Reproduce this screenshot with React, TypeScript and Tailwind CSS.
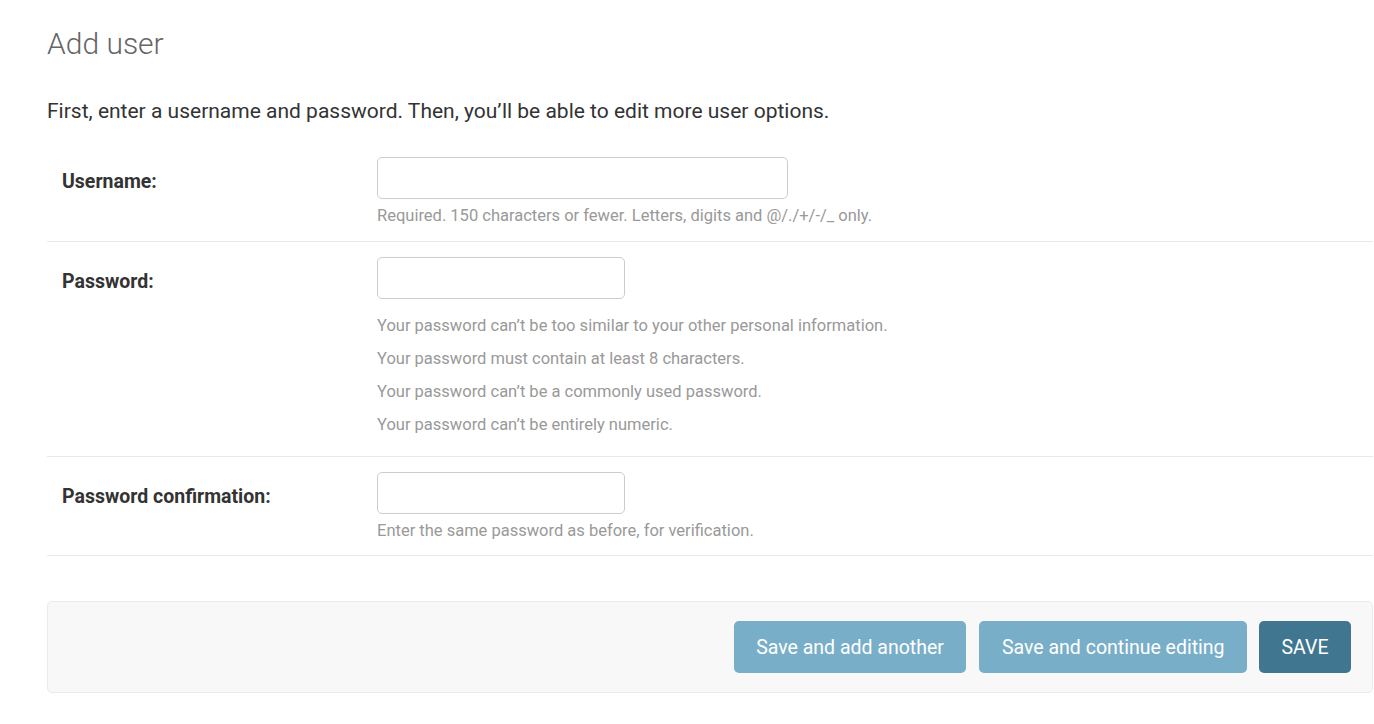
export default function App() {
  const rowCls = "flex px-[15px] pt-[15px] pb-[14px] border-b border-[#eaeaea]";
  const labelCls = "w-[315px] shrink-0 pt-[13px] text-[19.5px] leading-[24px] font-bold text-[#333]";
  const inputCls = "block h-[42px] rounded-[5px] border border-[#ccc] bg-white";
  const helpCls = "text-[16.5px] text-[#999]";
  return (
    <div className="min-h-[724px] bg-white" style={{ fontFamily: "Roboto, 'Liberation Sans', sans-serif" }}>
      <div className="pl-[47px] pt-[26px] w-[1374px]">
        <h1 className="text-[30px] font-light text-[#666] leading-[36px]">Add user</h1>
        <p className="mt-[37px] text-[21px] leading-[25px] text-[#333]">
          First, enter a username and password. Then, you’ll be able to edit more user options.
        </p>
        <div className="mt-[18px] w-[1326px]">
          <div className={rowCls}>
            <label className={labelCls}>Username:</label>
            <div>
              <input type="text" className={`${inputCls} w-[411px]`} />
              <div className={`${helpCls} mt-[6px] leading-[22px]`}>
                Required. 150 characters or fewer. Letters, digits and @/./+/-/_ only.
              </div>
            </div>
          </div>
          <div className={`${rowCls} !pb-[15px]`}>
            <label className={labelCls}>Password:</label>
            <div>
              <input type="password" className={`${inputCls} w-[248px]`} />
              <ul className={`${helpCls} mt-[10px]`}>
                <li className="leading-[33px]">Your password can’t be too similar to your other personal information.</li>
                <li className="leading-[33px]">Your password must contain at least 8 characters.</li>
                <li className="leading-[33px]">Your password can’t be a commonly used password.</li>
                <li className="leading-[33px]">Your password can’t be entirely numeric.</li>
              </ul>
            </div>
          </div>
          <div className={`${rowCls} !pb-[13px]`}>
            <label className={labelCls}>Password confirmation:</label>
            <div>
              <input type="password" className={`${inputCls} w-[248px]`} />
              <div className={`${helpCls} mt-[6px] leading-[22px]`}>
                Enter the same password as before, for verification.
              </div>
            </div>
          </div>
        </div>
        <div className="mt-[45px] w-[1326px] flex justify-end gap-[12px] rounded-[5px] border border-[#ebebeb] bg-[#f8f8f8] py-[19px] pr-[21px]">
          <button className="mr-[1px] h-[52px] rounded-[5px] bg-[#79aec8] px-[22.5px] pt-[1px] text-[19.5px] text-white">Save and add another</button>
          <button className="h-[52px] rounded-[5px] bg-[#79aec8] px-[22.5px] pt-[1px] text-[19.5px] text-white">Save and continue editing</button>
          <button className="h-[52px] rounded-[5px] bg-[#417690] px-[22.5px] pt-[1px] text-[19.5px] text-white">SAVE</button>
        </div>
      </div>
    </div>
  );
}
